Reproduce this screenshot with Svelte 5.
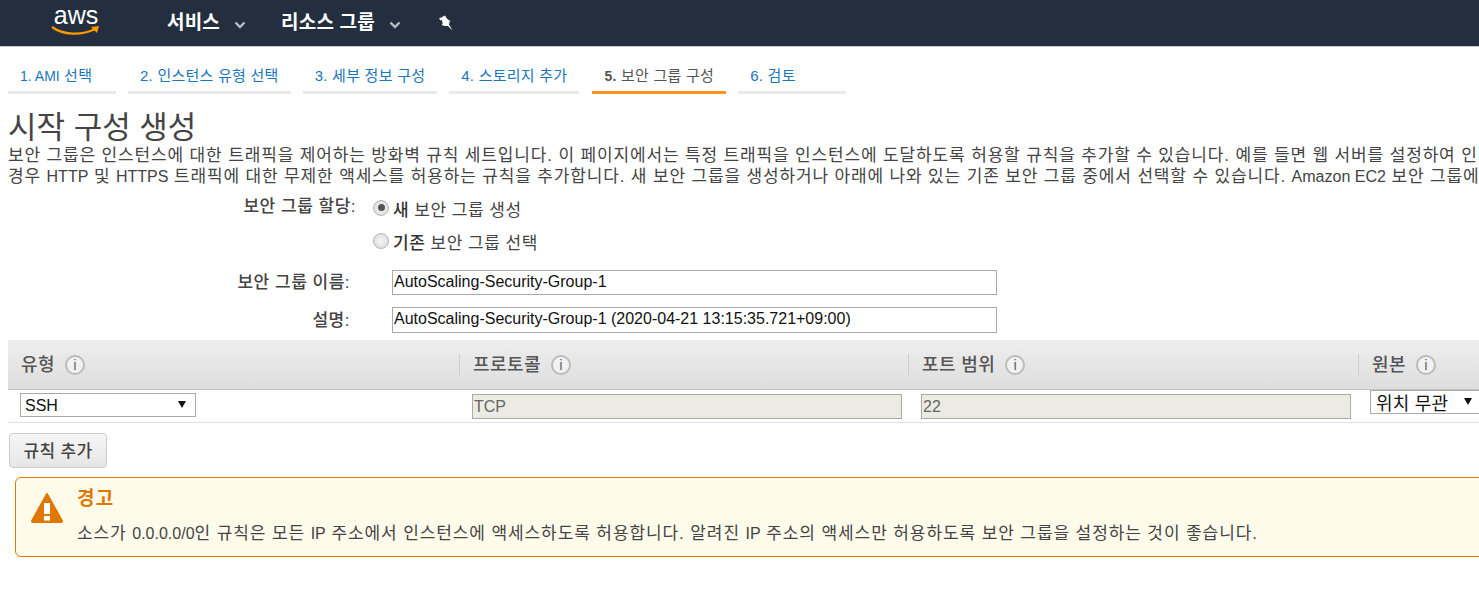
<script lang="ts">
  const steps = ['2. 인스턴스 유형 선택', '3. 세부 정보 구성', '4. 스토리지 추가'];
  const cols = ['유형', '프로토콜', '포트 범위', '원본'];
</script>

<div class="page">
  <header class="nav">
    <div class="logo">
      <span class="logo-text">aws</span>
      <svg class="smile" width="50" height="12" viewBox="0 0 50 12">
        <path d="M1 2 C12 10 30 11 44 4" fill="none" stroke="#f90" stroke-width="2.2" />
        <path d="M40 2 L48 1 L46 8 Z" fill="#f90" />
      </svg>
    </div>
    <span class="nav-item services">서비스</span>
    <svg class="caret" width="12" height="8" viewBox="0 0 12 8"><path d="M1.5 1.5 L6 6 L10.5 1.5" fill="none" stroke="#b8bcc2" stroke-width="2.4" /></svg>
    <span class="nav-item groups">리소스 그룹</span>
    <svg class="caret" width="12" height="8" viewBox="0 0 12 8"><path d="M1.5 1.5 L6 6 L10.5 1.5" fill="none" stroke="#b8bcc2" stroke-width="2.4" /></svg>
    <svg class="pin" width="16" height="16" viewBox="0 0 16 16">
      <path d="M7 0.5 L1 3.5 L2.5 5.5 L4 5 L4.5 9 L3.5 10 L7 11 L10 11 L14.5 15.5 L11 9.5 L11.5 7 L12.5 6 L10 4.5 L8.5 3 Z" fill="#fff" />
    </svg>
  </header>

  <nav class="tabs">
    <div class="tab"><span class="en">1. AMI</span> 선택</div>
    {#each steps as step (step)}
      <div class="tab">{step}</div>
    {/each}
    <div class="tab active"><b>5.</b> 보안 그룹 구성</div>
    <div class="tab">6. 검토</div>
  </nav>

  <h1>시작 구성 생성</h1>
  <p class="intro">보안 그룹은 인스턴스에 대한 트래픽을 제어하는 방화벽 규칙 세트입니다. 이 페이지에서는 특정 트래픽을 인스턴스에 도달하도록 허용할 규칙을 추가할 수 있습니다. 예를 들면 웹 서버를 설정하여 인<br />경우 <span class="en">HTTP</span> 및 <span class="en">HTTPS</span> 트래픽에 대한 무제한 액세스를 허용하는 규칙을 추가합니다. 새 보안 그룹을 생성하거나 아래에 나와 있는 기존 보안 그룹 중에서 선택할 수 있습니다. <span class="en">Amazon EC2</span> 보안 그룹에</p>

  <div class="form">
    <div class="row assign">
      <span class="label">보안 그룹 할당:</span>
      <div class="radios">
        <div class="radio-line"><span class="radio on"></span><span class="radio-text"><b>새</b> 보안 그룹 생성</span></div>
        <div class="radio-line"><span class="radio"></span><span class="radio-text"><b>기존</b> 보안 그룹 선택</span></div>
      </div>
    </div>
    <div class="row name">
      <span class="label">보안 그룹 이름:</span>
      <div class="input">AutoScaling-Security-Group-1</div>
    </div>
    <div class="row desc">
      <span class="label">설명:</span>
      <div class="input tall">AutoScaling-Security-Group-1 (2020-04-21 13:15:35.721+09:00)</div>
    </div>
  </div>

  <div class="grid-head">
    {#each cols as col (col)}
      <div class="cell">
        <span class="col-name">{col}</span>
        <span class="info">i</span>
      </div>
    {/each}
  </div>
  <div class="grid-row">
    <div class="cell-b"><div class="select ssh">SSH<i class="tri"></i></div></div>
    <div class="cell-b"><div class="readonly">TCP</div></div>
    <div class="cell-b"><div class="readonly">22</div></div>
    <div class="cell-b"><div class="select ko">위치 무관<i class="tri"></i></div></div>
  </div>

  <button class="add">규칙 추가</button>

  <div class="alert">
    <svg class="warn" width="34" height="32" viewBox="0 0 34 32">
      <path d="M17 2 L32 29 a1 1 0 0 1 -1 1 H3 a1 1 0 0 1 -1 -1 Z" fill="#e07700" stroke="#e07700" stroke-width="2" stroke-linejoin="round" />
      <rect x="14" y="11" width="6" height="11" fill="#fff" />
      <rect x="14" y="24" width="6" height="4.5" fill="#fff" />
    </svg>
    <div>
      <div class="alert-title">경고</div>
      <div class="alert-text">소스가 <span class="en">0.0.0.0/0</span>인 규칙은 모든 <span class="en">IP</span> 주소에서 인스턴스에 액세스하도록 허용합니다. 알려진 <span class="en">IP</span> 주소의 액세스만 허용하도록 보안 그룹을 설정하는 것이 좋습니다.</div>
    </div>
  </div>
</div>

<style>
  :global(body) {
    margin: 0;
    overflow: hidden;
    background: #fff;
  }

  .page {
    width: 1479px;
    height: 589px;
    overflow: hidden;
    font-family: "Liberation Sans", "Noto Sans CJK KR", sans-serif;
    color: #444;
    font-size: 14px;
  }

  .en {
    letter-spacing: 0;
    font-size: 16px;
  }

  .nav {
    height: 46px;
    background: #232f3e;
    border-bottom: 1px solid #ccc;
    display: flex;
    align-items: center;
    color: #fff;
  }

  .logo {
    width: 50px;
    margin: -4px 0 0 51px;
    height: 40px;
    flex-shrink: 0;
  }

  .logo-text {
    display: block;
    font-family: "Liberation Sans", sans-serif;
    font-size: 25px;
    line-height: 28px;
    text-align: center;
    color: #fff;
  }

  .smile {
    display: block;
    margin-top: -4px;
  }

  .nav-item {
    font-size: 19px;
    font-weight: 700;
    line-height: 24px;
    white-space: nowrap;
    letter-spacing: 0.2px;
  }

  .services {
    margin-left: 66px;
  }

  .groups {
    margin-left: 35px;
  }

  .caret {
    margin-left: 14px;
    margin-top: 3px;
  }

  .pin {
    margin-left: 37px;
  }

  .tabs {
    display: flex;
    gap: 12px;
    padding: 14px 0 0 8px;
    height: 33px;
  }

  .tab {
    box-sizing: content-box;
    min-width: 84px;
    padding: 5px 12px 0;
    height: 25px;
    border-bottom: 3px solid #eaeaea;
    color: #1a76bd;
    font-size: 15px;
    letter-spacing: 0.25px;
    line-height: 20px;
    white-space: nowrap;
  }

  .tab .en {
    font-size: 14px;
  }

  .tab b {
    font-size: 14px;
  }

  .tab.active {
    margin-left: 1px;
    color: #555;
    border-bottom-color: #f7931e;
  }

  h1 {
    margin: 17px 0 0 8px;
    font-size: 31px;
    font-weight: 400;
    line-height: 34px;
    color: #444;
  }

  .intro {
    margin: 0 0 0 8px;
    font-size: 17px;
    letter-spacing: 0.85px;
    line-height: 21px;
    white-space: nowrap;
    color: #444;
  }

  .form {
    margin-top: 4px;
  }

  .row {
    display: flex;
  }

  .label {
    width: 357px;
    box-sizing: border-box;
    padding-right: 7px;
    text-align: right;
    font-weight: 500;
    font-size: 17px;
    line-height: 20px;
    letter-spacing: 0.5px;
    color: #444;
  }

  .assign .label {
    padding-top: 6px;
    padding-right: 1px;
  }

  .desc .label {
    padding-top: 1px;
  }

  .radios {
    margin-left: 16px;
  }

  .radio-line {
    display: flex;
    align-items: center;
    gap: 4px;
    height: 33px;
    font-size: 17px;
    letter-spacing: 0.5px;
    color: #444;
  }

  .radio-text {
    padding-top: 2px;
  }

  .radio-line b {
    color: #333;
    font-weight: 500;
  }

  .radio {
    width: 14px;
    height: 14px;
    border-radius: 50%;
    border: 1px solid #b5b5b5;
    background: radial-gradient(#f5f5f5, #d8d8d8);
    position: relative;
    flex-shrink: 0;
  }

  .radio.on::after {
    content: '';
    position: absolute;
    left: 3.5px;
    top: 3.5px;
    width: 7px;
    height: 7px;
    border-radius: 50%;
    background: #555;
  }

  .name {
    margin-top: 13px;
    align-items: center;
  }

  .desc {
    margin-top: 12px;
    align-items: center;
  }

  .input {
    margin-left: 35px;
    width: 605px;
    height: 25px;
    box-sizing: border-box;
    border: 1px solid #aaa;
    padding-left: 1px;
    font-size: 16px;
    line-height: 22px;
    color: #111;
    white-space: nowrap;
  }

  .input.tall {
    height: 26px;
  }

  .grid-head {
    margin: 7px 0 0 8px;
    height: 49px;
    display: grid;
    grid-template-columns: 451px 449px 450px 200px;
    background: linear-gradient(#eeeeee, #dedede);
    border-bottom: 1px solid #c4c4c4;
    align-items: center;
  }

  .cell {
    display: flex;
    align-items: center;
    gap: 10px;
    height: 22px;
    padding-left: 13px;
    border-left: 1px solid #cfcfcf;
    font-size: 18px;
    letter-spacing: 0.4px;
    font-weight: 500;
    color: #555;
  }

  .cell:first-child {
    border-left: 0;
  }

  .col-name {
    padding-bottom: 3px;
  }

  .info {
    width: 20px;
    height: 20px;
    box-sizing: border-box;
    border: 2px solid #bbb;
    border-radius: 50%;
    background: #f2f2f2;
    display: flex;
    align-items: center;
    justify-content: center;
    font: 400 15px "Liberation Sans", sans-serif;
    letter-spacing: 0;
    color: #666;
  }

  .grid-row {
    margin-left: 8px;
    height: 32px;
    display: grid;
    grid-template-columns: 451px 449px 450px 200px;
    border-bottom: 1px solid #e2e2e2;
    align-items: center;
  }

  .cell-b {
    padding-left: 12px;
  }

  .cell-b:nth-child(2),
  .cell-b:nth-child(3) {
    padding-left: 13px;
  }

  .cell-b:nth-child(4) {
    align-self: start;
  }

  .select {
    position: relative;
    height: 24px;
    box-sizing: border-box;
    border: 1px solid #aaa;
    padding-left: 4px;
    font-size: 16px;
    line-height: 23px;
    color: #111;
    background: #fff;
    white-space: nowrap;
  }

  .ssh {
    width: 176px;
    margin-bottom: 2px;
  }

  .ko {
    width: 120px;
    padding-left: 5px;
    font-size: 18px;
    letter-spacing: 0.2px;
    line-height: 27px;
    overflow: hidden;
  }

  .tri {
    position: absolute;
    top: 7px;
    width: 0;
    height: 0;
    border-left: 4px solid transparent;
    border-right: 4px solid transparent;
    border-top: 7px solid #111;
  }

  .ssh .tri {
    right: 9px;
  }

  .ko .tri {
    left: 93px;
  }

  .readonly {
    width: 430px;
    height: 25px;
    box-sizing: border-box;
    border: 1px solid #aaa;
    background: #ebebe4;
    color: #666;
    padding-left: 1px;
    font-size: 16px;
    line-height: 23px;
  }

  .add {
    display: block;
    margin: 10px 0 0 9px;
    width: 98px;
    height: 35px;
    border: 1px solid #ccc;
    border-radius: 4px;
    background: linear-gradient(#f6f6f6, #e6e6e6);
    font-family: inherit;
    font-size: 17px;
    letter-spacing: 0.3px;
    font-weight: 500;
    color: #444;
    padding: 0 0 2px;
  }

  .alert {
    margin: 9px 0 0 15px;
    width: 1500px;
    height: 80px;
    box-sizing: border-box;
    border: 1px solid #e07b00;
    border-radius: 6px;
    background: #fffbea;
    display: flex;
    padding: 10px 0 0 14px;
    gap: 13px;
  }

  .warn {
    margin-top: 4px;
    flex-shrink: 0;
  }

  .alert-title {
    font-size: 19px;
    letter-spacing: 1.2px;
    font-weight: 700;
    color: #e07700;
    line-height: 22px;
  }

  .alert-text {
    margin-top: 13px;
    font-size: 17px;
    letter-spacing: 0.9px;
    line-height: 22px;
    color: #444;
    white-space: nowrap;
  }
</style>
